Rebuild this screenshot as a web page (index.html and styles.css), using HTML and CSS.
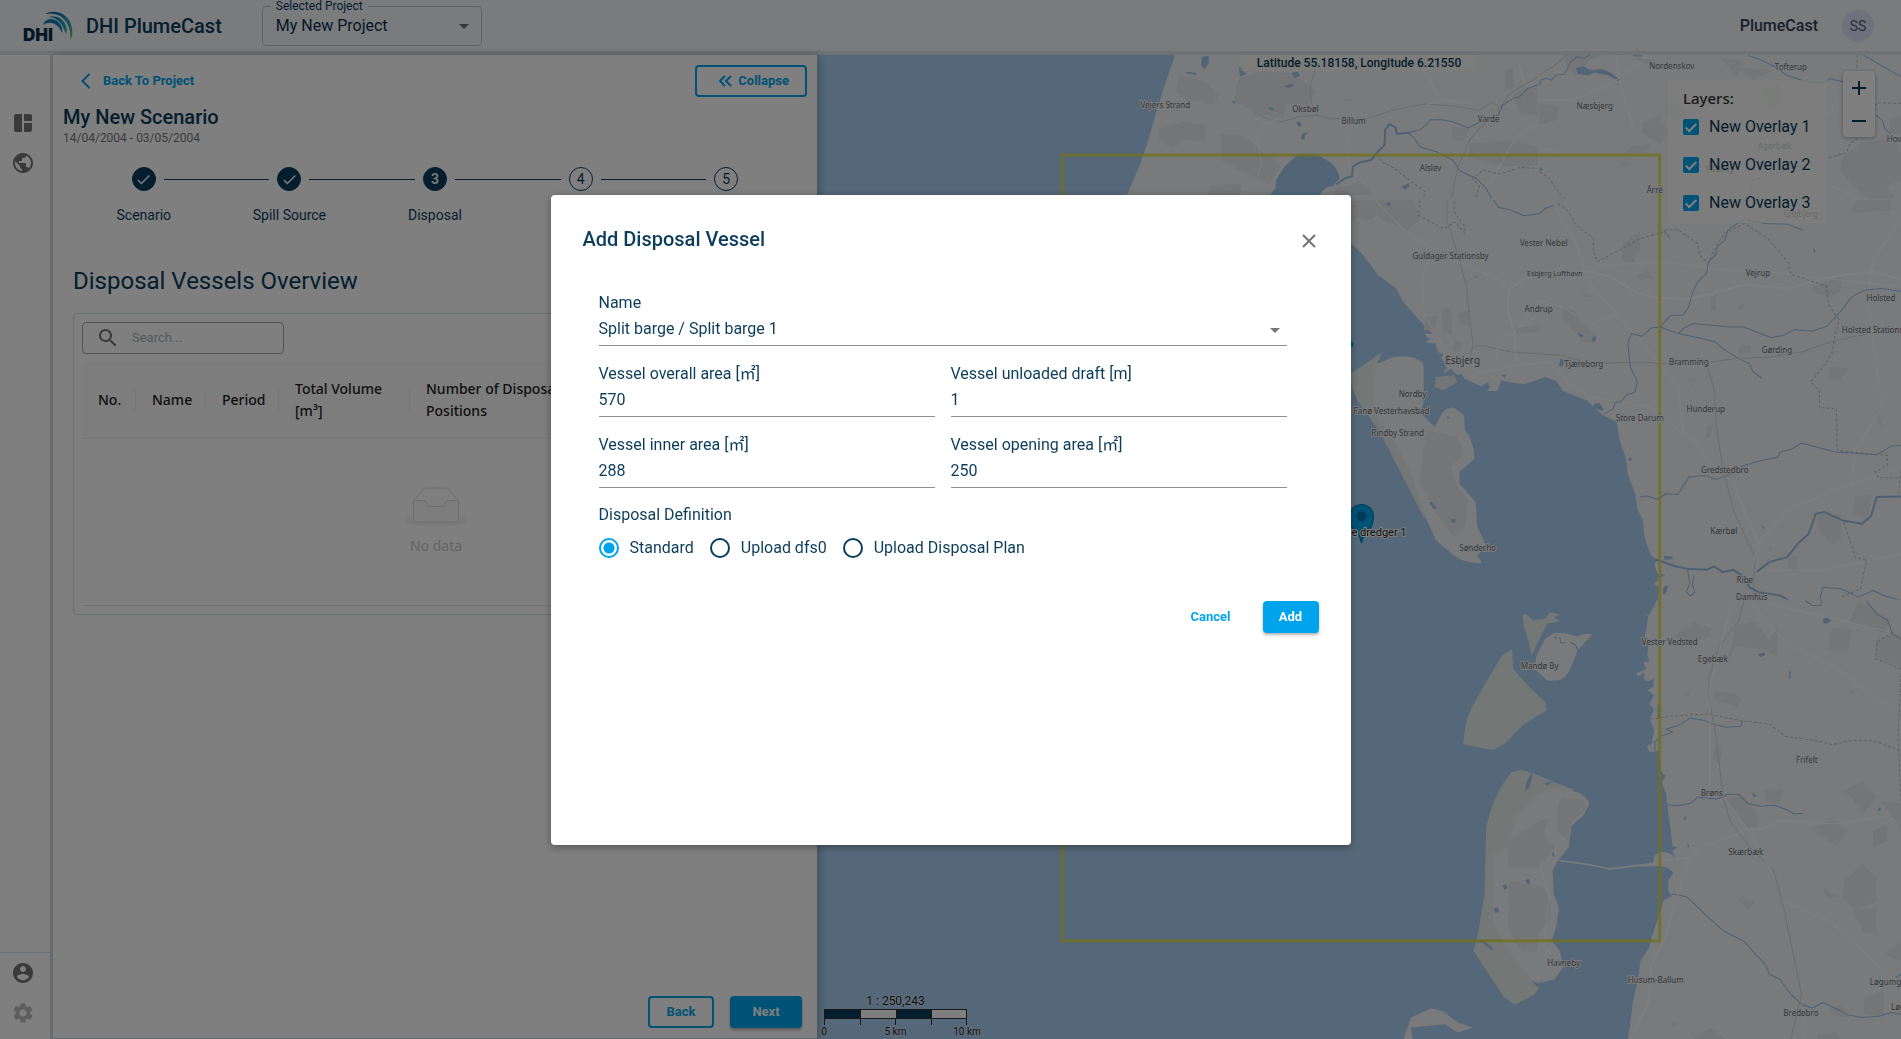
FILE: index.html
```html
<!DOCTYPE html>
<html lang="en">
<head>
<meta charset="utf-8">
<title>DHI PlumeCast</title>
<link rel="stylesheet" href="styles.css">
</head>
<body>
<div class="app">
  <header class="topbar">
    <svg class="logo" viewBox="0 0 52 34" aria-hidden="true">
      <defs>
        <linearGradient id="wave" gradientUnits="userSpaceOnUse" x1="22" y1="4" x2="50" y2="30">
          <stop offset="0" stop-color="#0b4d80"/><stop offset=".5" stop-color="#1a9bc4"/><stop offset=".8" stop-color="#3fae8a"/><stop offset="1" stop-color="#63b54a"/>
        </linearGradient>
      </defs>
      <path fill="url(#wave)" d="M22 5C31 0 43 4 47 13C50 20 50 27 47 31C48 25 47 19 44 14C40 7 32 3 22 5Z"/>
      <path fill="url(#wave)" d="M26 8C35 6 41 11 43 17C44 20 44 23 43 25C41 20 39 14 34 11C32 9 29 8 26 8Z"/>
      <path fill="#0d7fb4" d="M20 16C22 10 28 8 34 12C38 15 40 19 39 24C37 19 35 17 33 16C30 13 24 13 20 16Z"/>
      <text class="logo-text" x="0" y="32">DHI</text>
    </svg>
    <h1 class="brand">DHI PlumeCast</h1>
    <div class="project">
      <label class="project-label" for="project">Selected Project</label>
      <select class="project-select" id="project"><option>My New Project</option></select>
    </div>
    <span class="product">PlumeCast</span>
    <span class="avatar">SS</span>
  </header>

  <div class="body">
    <nav class="rail">
      <a class="rail-link" href="#dashboard" aria-label="Dashboard"><svg class="icon" viewBox="0 0 24 24"><path d="M11 21H5c-1.100 0-2-.9-2-2V5c0-1.100.9-2 2-2h6v18zm2 0h6c1.100 0 2-.9 2-2v-7h-8v9zm8-11V5c0-1.100-.9-2-2-2h-6v7h8z"/></svg></a>
      <a class="rail-link" href="#world" aria-label="World"><svg class="icon" viewBox="0 0 24 24"><path d="M12 2C6.480 2 2 6.480 2 12s4.480 10 10 10 10-4.480 10-10S17.520 2 12 2zm-1 17.930c-3.950-.49-7-3.850-7-7.930 0-.62.08-1.210.21-1.790L9 15v1c0 1.100.9 2 2 2v1.930zm6.900-2.540c-.26-.81-1-1.390-1.900-1.390h-1v-3c0-.55-.45-1-1-1H8v-2h2c.55 0 1-.45 1-1V7h2c1.100 0 2-.9 2-2v-.41c2.930 1.190 5 4.060 5 7.410 0 2.080-.8 3.970-2.100 5.390z"/></svg></a>
      <div class="rail-bottom">
        <a class="rail-link" href="#account" aria-label="Account"><svg class="icon" viewBox="0 0 24 24"><path d="M12 2C6.480 2 2 6.480 2 12s4.480 10 10 10 10-4.480 10-10S17.520 2 12 2zm0 3c1.660 0 3 1.340 3 3s-1.340 3-3 3-3-1.340-3-3 1.340-3 3-3zm0 14.200c-2.500 0-4.710-1.280-6-3.220.03-1.990 4-3.080 6-3.080 1.990 0 5.970 1.090 6 3.080-1.290 1.940-3.500 3.220-6 3.220z"/></svg></a>
        <a class="rail-link rail-muted" href="#settings" aria-label="Settings"><svg class="icon" viewBox="0 0 24 24"><path d="M19.140 12.940c.04-.3.06-.61.06-.94 0-.32-.02-.64-.07-.94l2.030-1.580c.18-.14.23-.41.12-.61l-1.920-3.320c-.12-.22-.37-.29-.59-.22l-2.390.96c-.5-.38-1.030-.7-1.620-.94l-.36-2.540c-.04-.24-.24-.41-.48-.41h-3.840c-.24 0-.43.17-.47.41l-.36 2.540c-.59.24-1.130.57-1.620.94l-2.390-.96c-.22-.08-.47 0-.59.22L2.740 8.870c-.12.21-.08.47.12.61l2.030 1.580c-.05.3-.09.63-.09.94s.02.64.07.94l-2.030 1.580c-.18.14-.23.41-.12.61l1.920 3.320c.12.22.37.29.59.22l2.390-.96c.5.38 1.030.7 1.620.94l.36 2.540c.05.24.24.41.48.41h3.840c.24 0 .44-.17.47-.41l.36-2.540c.59-.24 1.130-.56 1.620-.94l2.390.96c.22.08.47 0 .59-.22l1.920-3.320c.12-.22.07-.47-.12-.61l-2.010-1.580zM12 15.600c-1.980 0-3.600-1.620-3.600-3.600s1.620-3.600 3.600-3.600 3.600 1.620 3.600 3.600-1.620 3.600-3.600 3.600z"/></svg></a>
      </div>
    </nav>

    <main class="panel">
      <div class="panel-top">
        <a class="back-link" href="#project"><svg class="chevron" viewBox="0 0 10 16"><path d="M8.500 1 1.500 8l7 7"/></svg>Back To Project</a>
        <button class="btn btn-outline btn-collapse" type="button"><svg class="double" viewBox="0 0 14 12"><path d="M7 1 2 6l5 5M13 1 8 6l5 5"/></svg>Collapse</button>
      </div>
      <h2 class="scenario">My New Scenario</h2>
      <p class="dates">14/04/2004 - 03/05/2004</p>

      <ol class="steps">
        <li class="step"><span class="dot dot-on"><svg class="tick" viewBox="0 0 24 24"><path d="M9 16.170L4.830 12l-1.420 1.410L9 19 21 7l-1.410-1.410z"/></svg></span>Scenario</li>
        <li class="step"><span class="dot dot-on"><svg class="tick" viewBox="0 0 24 24"><path d="M9 16.170L4.830 12l-1.420 1.410L9 19 21 7l-1.410-1.410z"/></svg></span>Spill Source</li>
        <li class="step"><span class="dot dot-on dot-current">3</span>Disposal</li>
        <li class="step"><span class="dot">4</span>Forcing</li>
        <li class="step"><span class="dot">5</span>Execute</li>
      </ol>

      <h3 class="overview">Disposal Vessels Overview</h3>
      <section class="card">
        <label class="search"><svg class="search-icon" viewBox="0 0 24 24"><path d="M15.500 14h-.79l-.28-.27C15.410 12.590 16 11.110 16 9.500 16 5.910 13.090 3 9.500 3S3 5.910 3 9.500 5.910 16 9.500 16c1.610 0 3.090-.59 4.230-1.570l.27.28v.79l5 4.990L20.490 19l-4.990-5zm-6 0C7.010 14 5 11.990 5 9.500S7.010 5 9.500 5 14 7.010 14 9.500 11.990 14 9.500 14z"/></svg>
          <input class="search-input" type="search" placeholder="Search..." aria-label="Search"></label>
        <table class="vessels">
          <colgroup><col class="c-no"><col class="c-name"><col class="c-period"><col class="c-volume"><col><col class="c-actions"></colgroup>
          <thead><tr><th>No.</th><th>Name</th><th>Period</th><th>Total Volume [m³]</th><th>Number of Disposal Positions</th><th></th></tr></thead>
          <tbody><tr><td colspan="6"><div class="empty">
            <svg class="empty-icon" viewBox="0 0 64 41"><g transform="translate(0 1)" fill="none" fill-rule="evenodd"><ellipse fill="#f5f5f5" cx="32" cy="33" rx="32" ry="7"/><g fill-rule="nonzero" stroke="#d9d9d9"><path d="M55 12.760L44.854 1.258C44.367.474 43.656 0 42.907 0H21.093c-.749 0-1.460.474-1.947 1.257L9 12.761V22h46v-9.240z"/><path d="M41.613 15.931c0-1.605.994-2.930 2.227-2.931H55v18.137C55 33.260 53.680 35 52.050 35h-40.100C10.320 35 9 33.259 9 31.137V13h11.160c1.233 0 2.227 1.323 2.227 2.928v.022c0 1.605 1.005 2.901 2.237 2.901h14.752c1.232 0 2.237-1.308 2.237-2.913v-.007z" fill="#fafafa"/></g></g></svg>
            <span class="empty-text">No data</span></div></td></tr></tbody>
        </table>
      </section>
      <div class="panel-actions">
        <button class="btn btn-outline btn-back" type="button">Back</button>
        <button class="btn btn-solid btn-next" type="button">Next</button>
      </div>
    </main>

    <section class="map" aria-label="Map">
      <svg class="map-canvas" viewBox="818 55 1083 984" preserveAspectRatio="xMaxYMin slice">
        <!-- north-west: Vejers Strand, Oksbøl, Varde -->
        <g transform="translate(1040 50) scale(.33333)">
          <path class="land" d="M410 0 407 15 375 110 350 190 322 285 300 350 262 435 240 500H1510V0Z"/>
          <path class="wood" d="M420 75 500 95 540 140 515 165 480 150 445 155 410 125ZM360 235 430 215 500 225 495 275 440 270 400 292 360 275ZM600 85 660 65 760 70 830 120 800 165 740 160 730 205 660 190 585 155 590 110ZM545 250 620 260 660 300 710 325 725 350 690 400 620 370 545 330ZM520 405 610 400 600 435H500ZM915 145 940 150 938 156 912 152ZM1395 60 1420 55 1425 110 1395 125ZM1420 130 1500 100V200L1440 190ZM1290 280 1400 270 1500 290V345L1400 350 1285 320ZM890 410 990 400 1000 435H880ZM1240 230 1290 235 1270 275 1235 265Z"/>
          <path class="water" d="M690 437 708 415 710 390 735 350 775 313Q810 308 840 318L870 335Q898 355 900 385L880 408Q850 410 842 437L830 500H680ZM487 20 508 18 508 40 495 58 485 45ZM440 65 472 68 470 75 440 70ZM598 50 607 55 620 72 602 80ZM755 68 775 65 782 78 765 84ZM735 108 758 101 765 106 745 115ZM685 170 705 175 695 182ZM575 152 590 155 585 162ZM770 218 780 213 788 225 778 231ZM785 258 793 247 808 249 797 255 795 270 785 265ZM1087 410 1110 398 1108 410 1095 420Z"/>
          <path class="road" d="M640 185 690 208 725 215 780 200 830 195 860 203 905 207 985 205 1060 180 1160 162 1240 168 1320 180 1355 157 1375 165 1380 190 1330 225 1290 270 1255 350 1235 450M1380 175 1410 130 1500 78M828 60 812 105 815 160 835 195"/>
          <path class="lane" d="M720 205 670 225 655 275 665 340 655 390 600 430M925 215 927 350 960 380 1005 430M1140 40 1205 150 1290 160M1205 150 1160 165M1440 50 1455 100 1500 115M1500 220 1430 260 1350 400"/>
          <path class="river river-wide" d="M890 403 915 385 938 378 940 350 960 337 995 330 1015 305 1035 285 1037 240 1050 222 1068 232 1072 252 1105 248"/>
          <path class="river" d="M1105 248 1140 240 1162 222 1170 210 1200 208 1240 215 1285 234 1330 212 1375 195 1390 165 1420 145 1440 140 1465 115 1500 102M1105 248 1125 265 1140 290 1190 305 1240 330 1260 362 1310 385 1340 415 1358 450"/>
          <path class="border" d="M1015 310 1025 335 1060 352 1157 425 1150 450M1500 355 1440 352 1380 372 1330 360 1300 385 1320 410 1305 450"/>
        </g>
        <!-- north-east: Næsbjerg, Tofterup, Agerbæk -->
        <g transform="translate(1540 0) scale(.33333)">
          <path class="land" d="M-6 150H1100V740H-6Z"/>
          <path class="wood" d="M70 165 200 165 150 180 105 230 85 200ZM280 170 340 180 320 195ZM540 175 610 180 590 225ZM590 200 700 210 640 240ZM370 320 410 300 440 340 410 365ZM310 370 360 345 385 400 360 430 305 400ZM270 440 330 430 320 458H260ZM0 310 60 320 50 360 0 375ZM230 480 280 490 250 500ZM905 475 960 430 1070 410 1083 470V540L1040 560 1070 600 1010 610 940 560 900 510ZM1050 360 1083 345V400L1050 400ZM660 270 720 250 730 320 690 330Z"/>
          <path class="water" d="M108 205 130 198 150 210 190 208 215 220 242 240 235 243 205 226 165 218 145 226 115 222ZM0 500 10 508 0 515Z"/>
          <path class="road" d="M0 223 40 200 80 165"/>
          <path class="lane" d="M0 300 100 300 200 260 300 190 320 165M230 165 240 250 280 380M850 250 880 330 830 380 790 460M700 400 850 350 900 300M0 440 60 460M190 640 300 600 380 560M880 560 1000 620 1083 640"/>
          <path class="river" d="M0 255 5 240 20 235 35 240 50 225 75 222 90 190 110 170 130 175 150 165M280 167 308 168M625 167 660 178 700 198 740 225 790 242 850 248 870 236 910 245M970 165 1030 200 1083 230M1000 340 1025 358 1035 385 1060 410M0 636 20 620 40 618M550 720 555 695 580 680 615 655 650 655 700 665 750 675 790 690"/>
          <path class="border" d="M952 165 950 215M1083 310 1010 308 1000 345 960 410 930 430 920 458 850 478 740 510 640 540 620 640 600 675 640 690 660 720M0 515 30 535 55 575 80 600 55 612 80 640 95 680 120 690 130 720M365 690 400 685 445 700 410 715"/>
        </g>
        <!-- centre-east: Esbjerg, Bramming, Ribe -->
        <g transform="translate(1340 200) scale(.35779 .33333)">
          <path class="land" d="M0 95 31 128 60 158 95 205 105 222 158 265 178 305 215 350 250 390 260 402 238 400 245 412 255 415 240 425 262 430 268 428 275 455 290 462 285 475 300 500 290 520 310 505 330 525 340 520 350 535 395 558 415 545 420 560 412 572 440 572 452 540 470 545 515 552 575 530 605 542 625 572 690 600 735 645 775 665 780 710 800 775 805 820 812 840 825 880 832 925 848 960 850 1000 858 1030 870 1065 890 1080 879 1088 888 1120 912 1122 892 1135 879 1152 892 1160 890 1203H1570V-5H0Z"/>
          <path class="sand" d="M31 520 60 500 118 455 105 490Q125 488 150 470L215 480 180 640 240 960 110 690 50 600 31 550Z"/>
          <path class="land" d="M105 492 150 470 180 468Q215 468 235 492L235 600 228 640 266 680 285 640Q300 620 320 622L348 645 350 690Q375 720 377 775L335 815 335 850 380 905 385 980 410 1035 385 1065 398 1087Q350 1090 320 1065L270 1020 240 950 200 820 150 715 110 660 95 600 95 540Z"/>
          <path class="wood" d="M245 690 330 710 350 760 310 800 330 860 360 900 350 980 320 1010 270 940 225 850 235 740ZM0 10 60 0 120 30 90 60 50 50 31 70 0 90ZM60 0 210 0 225 60 190 90 120 60ZM240 350 275 345 265 390 235 390ZM285 325 310 320 315 400 290 400ZM320 420 345 425 335 455 315 450ZM330 340 365 330 370 380 335 370ZM620 320 655 330 680 370 715 405 715 430 680 425 625 360ZM490 380 565 378 555 395 490 400ZM790 120 840 95 840 150 820 188 790 180ZM825 230 860 210 875 235 840 240ZM1320 260 1400 230 1400 270 1370 290 1320 275ZM1440 0 1540 0 1540 30 1430 40ZM1370 500 1420 505 1400 540 1365 535ZM270 530 320 525 330 545 290 570 265 560ZM1340 940 1400 940 1400 1020 1370 1030 1330 975ZM1440 890 1490 880 1475 950 1435 940ZM1255 1065 1280 1070 1275 1110 1250 1100ZM1110 460 1120 435 1145 435 1150 460ZM1035 295 1055 280 1050 330 1035 335ZM1110 325 1125 310 1130 325 1120 330ZM1025 680 1045 670 1035 710 1022 715ZM970 535 1000 530 985 560ZM280 155 345 155 340 180 280 180ZM350 245 400 215 385 235ZM1500 630 1520 680 1510 690ZM675 270 705 290 685 290ZM1195 1040 1210 1040 1205 1055Z"/>
          <path class="water" d="M130 8 140 6 142 16 133 18ZM667 397 680 405 680 412 670 408ZM705 412 718 408 714 424 706 422ZM612 498 618 475 630 480 622 500ZM710 610 725 608 738 625 735 632 710 622ZM298 646 308 650 303 657ZM250 905 258 905 272 925 262 925ZM310 955 325 957 323 967 314 966ZM805 775 818 772 812 784ZM905 1065 930 1068 930 1076 908 1078ZM1178 975 1186 978 1183 987ZM1322 145 1330 150 1327 160ZM905 1160 918 1152 912 1178 902 1182ZM452 525 467 522 462 532Z"/>
          <path class="motorway" d="M495 490 488 400 470 330 472 270 510 240 570 218 700 213 760 232 830 275 880 292 970 297 1060 275 1130 253 1250 265 1300 250 1350 235 1420 222 1500 215 1568 240"/>
          <path class="road" d="M300 0 300 60 335 180 355 260 362 350 373 430 365 465M365 455 380 438 400 436 480 455 620 465 700 490 850 485 930 493 1030 487 1110 475 1200 470 1290 455 1380 422 1480 400M1025 497 1045 560 1055 700 1070 800 1100 930 1160 1070 1155 1203"/>
          <path class="lane" d="M100 0 190 100 320 180 450 240 470 270M250 170 230 240 235 340 290 440 300 500M360 530 400 515 490 495 590 485 640 550 700 590 870 620 950 690 990 720 1040 790 1100 850 1170 1030 1150 1110M600 20 660 130 700 250 780 350 880 470 945 560 960 690M500 240 650 190M500 380 560 300 620 320 700 370 770 345M700 200 895 185 1090 210 1250 220 1400 240 1568 258M820 100 720 190M1170 1030 1250 930 1400 860 1568 800M1160 1110 1350 1110 1568 1060M1568 60 1490 180 1475 300 1500 500 1515 620 1440 750 1430 850M440 480 440 420 490 390 555 345"/>
          <path class="river" d="M430 0 445 22 475 28 515 47 560 40 575 25 598 15M1130 60 1110 70 1085 90 1075 120 1055 140 1050 165 1030 185 1025 220 1000 245 985 280 975 320 960 345 925 345 895 380 870 383 845 408 815 400 805 430 812 500 832 545 825 575 800 585 785 605 770 605 765 625 740 640M1140 60 1190 70 1250 72 1295 90M895 380 945 400 960 385 985 370 1040 375 1090 380 1130 380 1175 400 1205 412 1240 405 1270 388 1320 393 1360 378 1390 345 1410 320 1430 290 1465 270 1510 265 1568 273M945 400 1000 412 1050 425 1070 445 1115 475 1145 490 1155 515 1180 533M838 890 860 887 890 897 910 880 945 882 975 830 1020 825 1050 837 1085 825 1120 800 1160 785 1225 770 1230 755 1265 745 1290 728 1350 745 1385 755 1430 758 1500 763 1540 738 1568 735M1340 1203 1350 1160 1400 1165 1450 1190 1490 1170 1520 1185 1568 1200"/>
          <path class="river river-wide" d="M885 1078 940 1098 970 1105 1025 1108 1045 1098 1070 1115 1100 1108 1130 1130 1145 1160 1170 1175 1230 1185 1260 1203M1165 1115 1200 1085 1250 1070 1280 1030 1310 1000 1330 940 1355 935 1405 960 1460 970 1485 945 1500 890 1568 888"/>
          <path class="river" d="M972 1105 978 1150 968 1175 980 1187 992 1175 985 1150 990 1125"/>
          <path class="border" d="M225 0 220 45 290 85 325 65 350 100 350 80 320 35 322 0M610 10 640 35 660 75 710 115 708 150 720 185 780 150 840 115 905 95 925 115 905 90 945 88 1000 130 1005 165 1030 188 1045 150 1075 100 1130 70 1190 110 1225 150 1255 190 1260 222 1360 258 1365 310 1395 360 1385 400 1375 460 1350 500 1315 545 1340 570 1340 622 1388 625 1390 750 1530 765 1530 795 1495 815 1505 832 1568 832M1568 810 1562 885M1408 965 1440 1070 1472 1080 1455 1165 1400 1190"/>
        </g>
        <!-- south-east: Mandø, Rømø, Skærbæk -->
        <g transform="translate(1340 600) scale(.35779 .33333)">
          <path class="land" d="M888 -3 864 45 850 36 862 48 858 80 852 105 862 140 860 165 866 182 848 185 858 205 828 218 835 228 850 215 852 240 862 242 878 235 876 260 860 268 878 285 865 310 878 325 868 355 878 390 872 430 859 437 865 455 892 450 897 510 910 528 900 545 912 580 915 610 925 690 930 735 943 740 930 750 937 770Q905 740 880 765L875 786 830 792 755 802 690 788 612 776 615 782 690 793 755 807 830 797 895 796 915 800 933 815 918 840 918 870 928 885 905 900 890 950 872 1010 865 1040 840 1080 835 1130 820 1200 805 1320H1570V-3Z"/>
          <path class="sand" d="M482 145 485 205 530 260 575 305 578 330 515 370 460 430 430 447 400 443 346 430Q348 370 370 320L420 225 455 165ZM512 45 520 40 540 60 575 55 588 36 617 42 600 50 614 62 580 70 558 115 536 165 528 120 514 75ZM480 515 508 507 545 520 600 545 657 568 600 580 470 740 440 900 560 1100 558 1160 545 1180 490 1212 460 1190 430 1140 374 1050 385 1010 405 880 410 680Q430 580 480 515Z"/>
          <path class="land" d="M600 97 630 98 665 108 685 100 706 102 690 120 665 150 650 190Q635 235 610 240H580L545 205 550 165 575 115ZM650 570Q690 580 698 610L680 645 648 675 640 740 612 775 595 810 598 880 613 920 605 980 593 1018 615 1050 625 1100 600 1135 565 1145 530 1130 480 1060 430 970 430 760 470 740 490 650Q540 580 600 562ZM177 1320 200 1250 255 1222 290 1232 330 1265 372 1280 330 1295 295 1270 200 1280 204 1320Z"/>
          <path class="wood" d="M620 590 680 595 690 620 650 665 640 720 605 690 610 620ZM470 720 560 660 580 650 570 700 600 740 560 800 470 800ZM475 840 570 860 590 910 590 960 560 990 550 1050 510 1055 470 980ZM935 105 990 65 1040 85 1030 110 960 120ZM1105 75 1160 60 1200 120 1180 145 1110 135 1085 180ZM1180 140 1225 80 1220 170ZM1380 80 1430 90 1420 150 1365 150 1370 100ZM1450 0 1540 60 1520 100 1425 60ZM1500 110 1568 100V200L1500 175ZM1040 275 1100 275 1125 295 1110 320 1050 300ZM1415 275 1440 265 1435 285ZM960 280 985 275 975 290ZM1185 570 1240 565 1230 610 1190 605ZM1080 590 1130 590 1170 640 1170 680 1140 680 1110 650ZM1405 570 1460 545 1500 590 1460 640 1430 590ZM1320 680 1380 660 1420 690 1390 735 1330 695ZM1510 600 1568 610V690L1540 640ZM1490 690 1530 670 1530 720 1490 740ZM1410 840 1460 790 1500 830 1500 900 1440 930 1405 890ZM1350 860 1400 890 1360 895ZM1430 930 1500 920 1500 1000 1465 995ZM1110 890 1160 905 1140 930ZM1520 1060 1568 1020V1080ZM990 1310 1040 1280 1080 1317H990ZM1465 1190 1520 1170 1520 1250 1465 1240ZM925 1260 945 1265 935 1278ZM1335 1300 1390 1295 1400 1317H1335ZM1370 1220 1400 1210 1430 1250 1380 1245ZM1045 430 1070 435 1060 490 1045 480Z"/>
          <path class="water" d="M536 518 540 522 530 560 518 575 522 545ZM572 548 595 542 580 555ZM455 855 463 850 470 862 460 868ZM518 838 530 835 533 850 525 850ZM430 925 440 918 447 930 436 938ZM593 758 598 752 601 768 595 767ZM380 1020 400 1015 430 1045 425 1048 398 1025 382 1024ZM535 1140 560 1150 555 1160ZM1350 58 1360 48 1373 60 1362 70 1350 68ZM1168 160 1185 155 1190 163 1175 170ZM1256 212 1261 212 1259 233 1255 232ZM962 645 970 655 963 660ZM972 725 978 740 972 738ZM1152 575 1168 587 1155 590ZM1505 620 1514 626 1502 634ZM598 108 608 110 604 117ZM888 312 896 312V352H888ZM895 515 910 525 900 530Z"/>
          <path class="river" d="M615 110 618 125 630 128M645 125 660 135 668 155M882 450 880 425 900 405 930 395 912 385 945 375 980 352 1020 360 1050 372 1080 380 1120 377 1125 362M915 612 945 615 980 608 1000 590 1050 595 1070 590 1085 580 1115 582 1140 608 1175 617 1215 613 1250 628 1270 640 1295 638M928 880 970 888 1020 940 1072 990 1130 1022 1192 1095 1200 1120 1230 1135 1260 1180 1290 1210 1320 1222 1350 1205 1380 1220 1420 1242 1460 1250 1510 1245 1540 1235 1568 1240M1300 0 1320 15 1345 15 1345 0M1470 0 1500 40 1530 60 1545 100 1568 115M1568 1120 1555 1130"/>
          <path class="road" d="M1130 0 1115 60 1060 140 1032 230 1032 290 1050 400 1072 590 1090 660 1150 745 1212 808 1240 920 1290 1180 1260 1317"/>
          <path class="lane" d="M1100 0 1065 130 1035 250 1035 580M1072 590 1150 700 1215 830M1235 900 1370 960 1420 1010 1530 1120 1568 1150M905 780 980 770 1010 740 1110 700 1135 685 1180 685 1230 660 1390 670 1530 645 1568 670M590 770 560 790 585 880 570 1040 615 1070M975 775 940 900 910 1010 870 1090 865 1200 810 1317M1150 10 1250 130 1400 210 1500 300 1568 330M1200 10 1400 60 1540 95M1300 1317 1290 1210M1135 685H1180"/>
          <path class="border" d="M868 355 895 353 920 347 1030 340 1130 362 1200 370 1245 407 1340 422 1375 432 1430 420 1490 420 1568 450M1545 95 1500 125 1497 175 1568 205M1568 220 1560 400 1568 600"/>
        </g>
        <rect class="domain" x="1063" y="155" width="597" height="785"/>
        <g class="places">
          <text x="1166" y="108">Vejers Strand</text><text x="1306" y="112">Oksbøl</text><text x="1354" y="124">Billum</text><text x="1489" y="122">Varde</text><text x="1431" y="171">Alslev</text>
          <text x="1672" y="69">Nordenskov</text><text x="1791" y="70">Tofterup</text><text x="1595" y="109">Næsbjerg</text><text x="1655" y="193">Årre</text><text x="1775" y="149">Agerbæk</text><text x="1801" y="217">Glejbjerg</text><text x="1720" y="172">Fåborg</text><text x="1903" y="142">Hovborg</text>
          <text x="1451" y="259">Guldager Stationsby</text><text x="1544" y="246">Vester Nebel</text><text class="place-small" x="1555" y="276">Esbjerg Lufthavn</text><text x="1539" y="312">Andrup</text><text x="1758" y="276">Vejrup</text><text x="1881" y="301">Holsted</text><text x="1877" y="333">Holsted Stationsby</text>
          <text class="place-large" x="1463" y="364">Esbjerg</text><text x="1584" y="367">Tjæreborg</text><text x="1689" y="365">Bramming</text><text x="1777" y="353">Gørding</text><text x="1413" y="397">Nordby</text><text x="1392" y="414">Fanø Vesterhavsbad</text><text x="1398" y="436">Rindby Strand</text><text x="1640" y="421">Store Darum</text><text x="1706" y="412">Hunderup</text><text x="1725" y="473">Gredstedbro</text><text x="1724" y="534">Kærbøl</text><text x="1478" y="551">Sønderho</text><text x="1745" y="583">Ribe</text><text x="1752" y="600">Damhus</text>
          <text x="1670" y="644">Vester Vedsted</text><text x="1713" y="661">Egebæk</text><text x="1540" y="668">Mandø By</text><text x="1807" y="762">Frifelt</text><text x="1712" y="795">Brøns</text><text x="1746" y="854">Skærbæk</text><text x="1564" y="965">Havneby</text><text x="1656" y="982">Husum-Ballum</text><text x="1894" y="984">Løgumgårde</text><text x="1801" y="1015">Bredebro</text><text x="1917" y="1009">Løgumkloster</text>
        </g>
        <g class="pin">
          <path class="pin-body" d="M1362 542 1359 534Q1350 528 1350 516A12 12 0 0 1 1374 516Q1374 528 1365 534Z"/>
          <circle class="pin-core" cx="1362" cy="516" r="5"/>
          <circle class="pin-tip" cx="1351" cy="344" r="3"/>
          <text class="pin-label" x="1407" y="536">Backhoe dredger 1</text>
        </g>
      </svg>
      <p class="coords">Latitude 55.18158, Longitude 6.21550</p>
      <fieldset class="layers">
        <legend class="layers-title">Layers:</legend>
        <label class="layer"><input class="check" type="checkbox" checked>New Overlay 1</label>
        <label class="layer"><input class="check" type="checkbox" checked>New Overlay 2</label>
        <label class="layer"><input class="check" type="checkbox" checked>New Overlay 3</label>
      </fieldset>
      <div class="zoom">
        <button class="zoom-btn" type="button" aria-label="Zoom in"><svg class="zoom-icon" viewBox="0 0 14 14"><path d="M0 7H14M7 0V14"/></svg></button>
        <button class="zoom-btn" type="button" aria-label="Zoom out"><svg class="zoom-icon" viewBox="0 0 14 14"><path d="M0 7H14"/></svg></button>
      </div>
      <div class="scale">
        <span class="scale-ratio">1 : 250,243</span>
        <div class="scale-bar"><i></i><i></i><i></i><i></i></div>
        <div class="scale-ticks"><i></i><i></i><i></i><i></i></div>
        <div class="scale-labels"><span>0</span><span>5 km</span><span>10 km</span></div>
      </div>
    </section>
  </div>
</div>

<div class="backdrop">
  <form class="dialog" role="dialog" aria-modal="true" aria-labelledby="dialog-title">
    <div class="dialog-head">
      <h2 class="dialog-title" id="dialog-title">Add Disposal Vessel</h2>
      <button class="close" type="button" aria-label="Close"><svg class="close-icon" viewBox="0 0 14 14"><path d="M1 1 13 13M13 1 1 13"/></svg></button>
    </div>
    <div class="fields">
      <div class="field field-wide"><label for="name">Name</label><select class="control control-select" id="name"><option>Split barge / Split barge 1</option></select></div>
      <div class="field"><label for="overall">Vessel overall area [㎡]</label><input class="control" id="overall" value="570"></div>
      <div class="field"><label for="draft">Vessel unloaded draft [m]</label><input class="control" id="draft" value="1"></div>
      <div class="field"><label for="inner">Vessel inner area [㎡]</label><input class="control" id="inner" value="288"></div>
      <div class="field"><label for="opening">Vessel opening area [㎡]</label><input class="control" id="opening" value="250"></div>
    </div>
    <fieldset class="definition">
      <legend class="definition-title">Disposal Definition</legend>
      <div class="radios">
        <label class="option"><input class="radio" type="radio" name="definition" checked>Standard</label>
        <label class="option"><input class="radio" type="radio" name="definition">Upload dfs0</label>
        <label class="option"><input class="radio" type="radio" name="definition">Upload Disposal Plan</label>
      </div>
    </fieldset>
    <div class="dialog-actions">
      <button class="btn btn-text" type="button">Cancel</button>
      <button class="btn btn-solid btn-add" type="submit">Add</button>
    </div>
  </form>
</div>
</body>
</html>
```
FILE: styles.css
```css
:root {
  --navy: #0b3d5b;
  --blue: #00a4ec;
  --line: #dbe4e9;
  --grey: #757575;
}

* { box-sizing: border-box; }

body {
  margin: 0;
  font: 14px/20px Roboto, "Liberation Sans", sans-serif;
  color: var(--navy);
  background: #fff;
}

h1, h2, h3, p, ol, fieldset, legend { margin: 0; padding: 0; border: 0; }
button, input, select { font: inherit; color: inherit; }
a { text-decoration: none; }

.app { display: flex; flex-direction: column; height: 100vh; }

/* Top bar */
.topbar {
  display: flex;
  align-items: center;
  height: 55px;
  padding: 0 27px 0 23px;
  background: #f5f7fa;
  border-bottom: 4px solid var(--line);
}
.logo { width: 52px; height: 34px; overflow: visible; }
.logo-text { font: 900 17px Inter, sans-serif; fill: #0b2f4d; }
.brand { margin-left: 11px; font-size: 20px; line-height: 24px; font-weight: 500; }
.project { position: relative; width: 220px; margin-left: 40px; }
.project-label {
  position: absolute;
  top: -7px;
  left: 9px;
  padding: 0 5px;
  font-size: 12px;
  line-height: 14px;
  background: #f5f7fa;
}
.project-select {
  appearance: none;
  display: block;
  width: 100%;
  height: 40px;
  padding: 0 13px;
  font-size: 16px;
  color: #0b2f4d;
  border: 1px solid #bfc4c8;
  border-radius: 4px;
  background: transparent;
}
.project::after, .field-wide::after {
  content: "";
  position: absolute;
  right: 13px;
  top: 18px;
  border: 5px solid transparent;
  border-top-color: var(--grey);
  border-bottom: 0;
}
.product { margin-left: auto; font-size: 16px; font-weight: 500; color: #333f54; }
.avatar {
  width: 32px;
  margin-left: 24px;
  line-height: 32px;
  text-align: center;
  color: #55607a;
  background: #dfe5fa;
  border-radius: 50%;
}

/* Body columns */
.body { display: flex; flex: 1; min-height: 0; }
.rail {
  display: flex;
  flex-direction: column;
  width: 53px;
  padding-top: 48px;
  border-right: 3px solid var(--line);
}
.rail-link { display: flex; height: 40px; padding-left: 11px; align-items: center; color: var(--grey); }
.rail-muted { color: #bdbdbd; }
.rail-bottom { margin-top: auto; padding-bottom: 6px; border-top: 1px solid #cfe0ea; }
.icon { width: 24px; height: 24px; fill: currentColor; }

/* Scenario panel */
.panel {
  position: relative;
  z-index: 1;
  display: flex;
  flex-direction: column;
  width: 764px;
  padding: 10px 10px 10px 10px;
  background: #fff;
  border-bottom: 1px solid #cfd6da;
  box-shadow: 2px 0 8px rgba(0, 0, 0, .25);
}
.panel-top { display: flex; justify-content: space-between; align-items: center; margin-bottom: 8px; }
.back-link { display: flex; align-items: center; gap: 12px; padding-left: 18px; font-weight: 700; font-size: 13px; color: var(--blue); }
.chevron { width: 10px; height: 16px; fill: none; stroke: currentColor; stroke-width: 2; }
.btn {
  height: 32px;
  padding: 0 16px;
  font-size: 13px;
  font-weight: 700;
  border: 0;
  border-radius: 4px;
  background: none;
  color: var(--blue);
}
.btn-outline { border: 2px solid var(--blue); }
.btn-solid { min-width: 56px; color: #fff; background: var(--blue); box-shadow: 0 2px 3px rgba(0, 0, 0, .3); }
.btn-collapse { display: flex; align-items: center; gap: 6px; padding: 0 16px 0 21px; }
.double { width: 14px; height: 12px; fill: none; stroke: currentColor; stroke-width: 2; }
.scenario { font-size: 20px; line-height: 24px; font-weight: 500; }
.dates { font-size: 12px; line-height: 18px; color: var(--grey); }

.steps { display: flex; list-style: none; margin: 20px 8px 0; }
.step { position: relative; flex: 1; display: flex; flex-direction: column; align-items: center; gap: 14px; }
.step + .step::before {
  content: "";
  position: absolute;
  top: 12px;
  left: calc(-50% + 20px);
  right: calc(50% + 20px);
  border-top: 1px solid var(--navy);
}
.dot {
  display: flex;
  align-items: center;
  justify-content: center;
  width: 24px;
  height: 24px;
  border: 1px solid var(--navy);
  border-radius: 50%;
}
.dot-on { color: #fff; background: var(--navy); }
.dot-current { font-weight: 500; }
.tick { width: 17px; height: 17px; fill: #fff; }

.overview { margin: 40px 10px 16px; font-size: 24px; line-height: 32px; font-weight: 400; }
.card { margin: 0 8px 0 10px; padding: 8px; border: 1px solid #cfdde4; border-radius: 4px; }
.search {
  display: flex;
  align-items: center;
  width: 202px;
  height: 32px;
  margin-bottom: 8px;
  padding-left: 13px;
  border: 1px solid #a8a8a8;
  border-radius: 4px;
}
.search-icon { width: 24px; height: 24px; fill: var(--grey); }
.search-input { flex: 1; min-width: 0; margin-left: 12px; padding: 0; font-size: 13px; border: 0; outline: 0; background: none; }
.search-input::placeholder { color: #a9b3b8; }

.vessels {
  width: 100%;
  table-layout: fixed;
  border-collapse: separate;
  border-spacing: 0;
  font: 14px/22px "Noto Sans", sans-serif;
  color: #222;
}
.c-no { width: 54px; }
.c-name { width: 70px; }
.c-period { width: 73px; }
.c-volume { width: 131px; }
.c-actions { width: 200px; }
.vessels th {
  height: 76px;
  padding: 16px;
  font-weight: 500;
  text-align: left;
  border-bottom: 1px solid #f0f0f0;
  background: linear-gradient(#efefef, #efefef) right center / 1px 22px no-repeat #fafafa;
}
.vessels th:first-child { padding-right: 0; border-top-left-radius: 8px; }
.vessels th:nth-child(2), .vessels th:nth-child(3) { padding-right: 0; }
.vessels td { padding: 16px; border-bottom: 1px solid #e8e8e8; }
.empty { display: flex; flex-direction: column; align-items: center; gap: 8px; padding: 32px 0; }
.empty-icon { width: 64px; height: 40px; }
.empty-text { color: #c9c9c9; }
.panel-actions { display: flex; justify-content: flex-end; gap: 16px; margin-top: auto; padding-right: 5px; }
.btn-back { width: 66px; }
.btn-next { width: 72px; }

/* Map */
.map { position: relative; flex: 1; min-width: 0; overflow: hidden; background: #abd0f2; }
.map-canvas { display: block; width: 100%; height: 100%; }
.land { fill: #f3f5f7; }
.sand { fill: #e7f0ed; }
.wood { fill: #e9eaee; }
.water { fill: #a3cbee; }
.road, .lane, .motorway, .river, .border { fill: none; stroke-linejoin: round; vector-effect: non-scaling-stroke; }
.road { stroke: #d9d8d2; stroke-width: 1px; }
.lane { stroke: #fdfdfd; stroke-width: 1px; }
.motorway { stroke: #fff; stroke-width: 2px; }
.river { stroke: #9ac3e6; stroke-width: 1px; }
.river-wide { stroke-width: 2px; }
.border { stroke: #bfc0c4; stroke-width: 1px; stroke-dasharray: 3 2; }
.domain { fill: none; stroke: #e0e03c; stroke-width: 3px; opacity: .8; }
.places { font: 8px "Noto Sans", sans-serif; fill: #6e7178; text-anchor: middle; stroke: #f3f5f7; stroke-width: 2px; paint-order: stroke; }
.place-small { font-size: 7px; }
.place-large { font-size: 10px; }
.pin-body { fill: var(--blue); stroke: #0075b5; stroke-width: 1px; }
.pin-core { fill: #0075b5; }
.pin-tip { fill: var(--blue); }
.pin-label { font: 11px Roboto, sans-serif; fill: #222; stroke: #fff; stroke-width: 2px; paint-order: stroke; text-anchor: end; }

.coords {
  position: absolute;
  top: 0;
  left: 50%;
  transform: translateX(-50%);
  padding: 0 16px;
  font-size: 12px;
  font-weight: 500;
  line-height: 16px;
  white-space: nowrap;
  background: rgba(255, 255, 240, .4);
}
.layers {
  position: absolute;
  top: 25px;
  right: 74px;
  width: 159px;
  height: 143px;
  padding: 8px 15px 0;
  background: rgba(250, 253, 248, .7);
}
.layers-title { float: left; width: 100%; font: 500 15px/20px "Noto Sans", sans-serif; color: #333; }
.layer { display: flex; align-items: center; gap: 10px; height: 38px; font-size: 16px; line-height: 22px; white-space: nowrap; }
.layers-title + .layer { clear: both; }
.check {
  appearance: none;
  width: 16px;
  height: 16px;
  margin: 0;
  border-radius: 2px;
  background: var(--blue);
}
.check::before {
  content: "";
  display: block;
  width: 4px;
  height: 9px;
  margin: 2px 0 0 5px;
  border: solid #fff;
  border-width: 0 2px 2px 0;
  transform: rotate(45deg);
}
.zoom {
  position: absolute;
  top: 16px;
  right: 26px;
  width: 32px;
  border-radius: 4px;
  background: #fff;
  box-shadow: 0 1px 4px rgba(0, 0, 0, .3);
}
.zoom-btn { display: flex; align-items: center; justify-content: center; width: 32px; height: 33px; padding: 0; border: 0; background: none; }
.zoom-icon { width: 14px; height: 14px; stroke: var(--navy); stroke-width: 2; }
.scale { position: absolute; left: 7px; bottom: 1px; width: 143px; font-size: 10px; line-height: 12px; color: #222; text-shadow: 0 0 2px #fff; }
.scale-ratio { display: block; font-size: 12px; line-height: 16px; text-align: center; }
.scale-bar { display: grid; grid-template-columns: repeat(4, 1fr); height: 10px; border: 1px solid #333; }
.scale-bar i { background: var(--navy); }
.scale-bar i + i { border-left: 1px solid #333; }
.scale-bar i:nth-child(even) { background: #fff; }
.scale-ticks { display: grid; grid-template-columns: repeat(4, 1fr); height: 6px; border-right: 1px solid #333; }
.scale-ticks i { border-left: 1px solid #333; }
.scale-labels { display: flex; justify-content: space-between; margin: 1px -18px 0; }
.scale-labels span { width: 36px; text-align: center; }

/* Dialog */
.backdrop {
  position: fixed;
  inset: 0;
  z-index: 10;
  display: flex;
  align-items: center;
  justify-content: center;
  background: rgba(0, 0, 0, .5);
}
.dialog {
  width: 800px;
  max-width: calc(100% - 64px);
  min-height: 650px;
  padding: 32px;
  font-size: 16px;
  background: #fff;
  border-radius: 4px;
  box-shadow: 0 2px 8px rgba(0, 0, 0, .35);
}
.dialog-head { display: flex; justify-content: space-between; align-items: flex-start; margin-bottom: 38px; }
.dialog-title { font-size: 20px; line-height: 24px; font-weight: 500; }
.close { display: flex; padding: 7px 3px; border: 0; background: none; color: var(--grey); }
.close-icon { width: 14px; height: 14px; stroke: currentColor; stroke-width: 2; }
.fields { display: grid; grid-template-columns: 1fr 1fr; gap: 18px 16px; margin: 0 32px 0 16px; font-family: Roboto, "Noto Sans CJK JP", sans-serif; }
.field { position: relative; display: flex; flex-direction: column; line-height: 20px; }
.field-wide { grid-column: 1 / -1; }
.field-wide::after { right: 7px; top: 35px; }
.control {
  appearance: none;
  width: 100%;
  height: 33px;
  padding: 0;
  border: 0;
  border-bottom: 1px solid #8c9094;
  border-radius: 0;
  outline: 0;
  background: transparent;
}
.definition { margin: 16px 16px 0; }
.definition-title { line-height: 22px; }
.radios { display: flex; gap: 16px; margin-top: 12px; }
.option { display: flex; align-items: center; gap: 11px; }
.radio { appearance: none; width: 20px; height: 20px; margin: 0; border: 2px solid var(--navy); border-radius: 50%; }
.radio:checked { border-color: var(--blue); background: radial-gradient(circle, var(--blue) 5px, transparent 6px); }
.dialog-actions { display: flex; justify-content: flex-end; gap: 16px; margin-top: 43px; }
```
